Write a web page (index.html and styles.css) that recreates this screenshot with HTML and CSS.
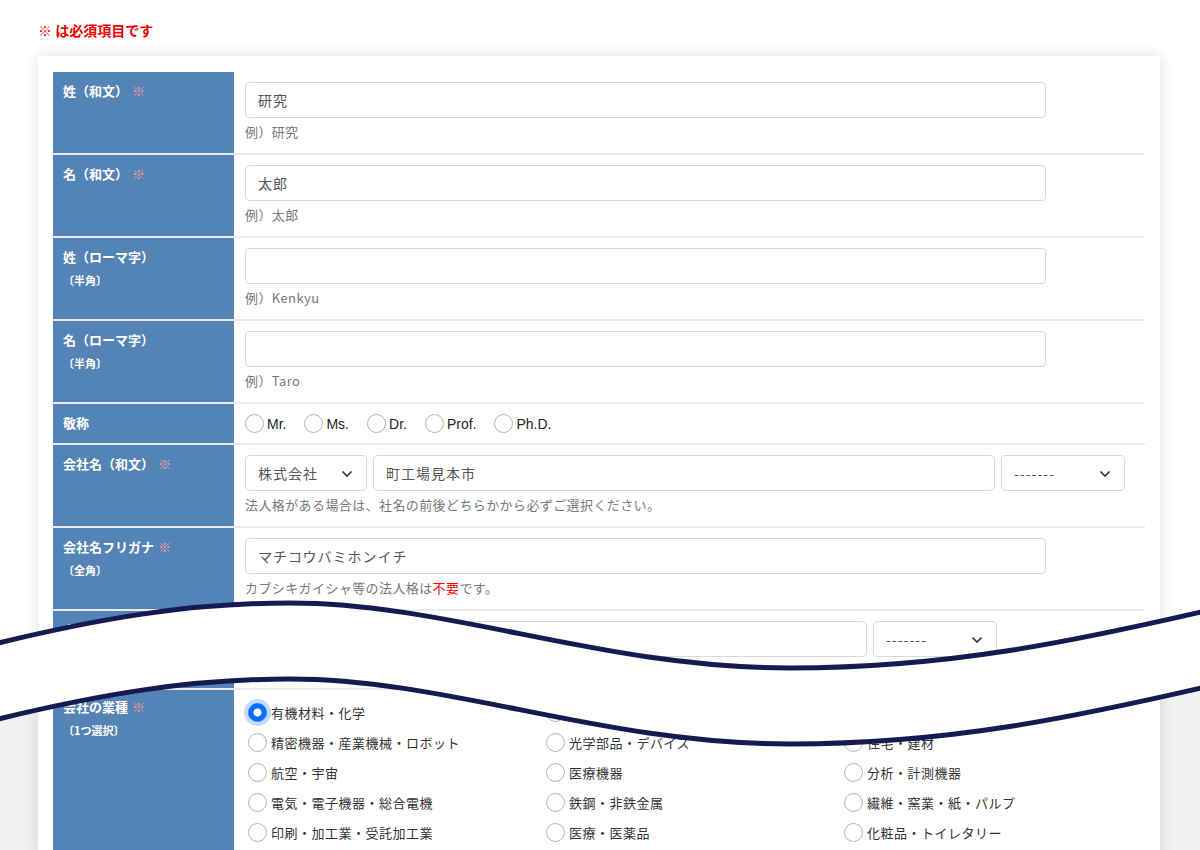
FILE: index.html
```html
<!DOCTYPE html>
<html lang="ja">
<head>
    <meta charset="UTF-8">
    <meta name="viewport" content="width=device-width, initial-scale=1.0">
    <title>お問い合わせフォーム</title>
    <link rel="stylesheet" href="styles.css">
</head>
<body>
    <p class="note">※ は必須項目です</p>

    <section class="card">
        <div class="form-table">
            <div class="row">
                <div class="label">姓（和文）<span class="req">※</span></div>
                <div class="field">
                    <input class="input wide" type="text" value="研究">
                    <p class="hint">例）研究</p>
                </div>
            </div>
            <div class="row">
                <div class="label">名（和文）<span class="req">※</span></div>
                <div class="field">
                    <input class="input wide" type="text" value="太郎">
                    <p class="hint">例）太郎</p>
                </div>
            </div>
            <div class="row">
                <div class="label">姓（ローマ字）<small>〔半角〕</small></div>
                <div class="field">
                    <input class="input wide" type="text">
                    <p class="hint">例）Kenkyu</p>
                </div>
            </div>
            <div class="row">
                <div class="label">名（ローマ字）<small>〔半角〕</small></div>
                <div class="field">
                    <input class="input wide" type="text">
                    <p class="hint">例）Taro</p>
                </div>
            </div>
            <div class="row">
                <div class="label">敬称</div>
                <div class="field field-center">
                    <div class="titles">
                        <label class="radio"><input type="radio" name="title">Mr.</label>
                        <label class="radio"><input type="radio" name="title">Ms.</label>
                        <label class="radio"><input type="radio" name="title">Dr.</label>
                        <label class="radio"><input type="radio" name="title">Prof.</label>
                        <label class="radio"><input type="radio" name="title">Ph.D.</label>
                    </div>
                </div>
            </div>
            <div class="row">
                <div class="label">会社名（和文）<span class="req">※</span></div>
                <div class="field">
                    <div class="group company">
                        <div class="select sel-pre">
                            <select><option>株式会社</option></select>
                            <svg viewBox="0 0 12 8"><polyline points="1.5,1.5 6,6 10.5,1.5"/></svg>
                        </div>
                        <input class="input grow" type="text" value="町工場見本市">
                        <div class="select sel-post">
                            <select><option>-------</option></select>
                            <svg viewBox="0 0 12 8"><polyline points="1.5,1.5 6,6 10.5,1.5"/></svg>
                        </div>
                    </div>
                    <p class="hint">法人格がある場合は、社名の前後どちらかから必ずご選択ください。</p>
                </div>
            </div>
            <div class="row">
                <div class="label">会社名フリガナ<span class="req">※</span><small>〔全角〕</small></div>
                <div class="field">
                    <input class="input wide" type="text" value="マチコウバミホンイチ">
                    <p class="hint">カブシキガイシャ等の法人格は<span class="red">不要</span>です。</p>
                </div>
            </div>
            <div class="row row-short">
                <div class="label">会社名（英文）<span class="req">※</span><small>〔半角英数字〕</small></div>
                <div class="field">
                    <div class="group company-en">
                        <input class="input grow" type="text">
                        <div class="select sel-post">
                            <select><option>-------</option></select>
                            <svg viewBox="0 0 12 8"><polyline points="1.5,1.5 6,6 10.5,1.5"/></svg>
                        </div>
                    </div>
                </div>
            </div>
            <div class="row">
                <div class="label label-tight">会社の業種<span class="req">※</span><small>〔1つ選択〕</small></div>
                <div class="field field-list">
                    <div class="industries">
                        <label class="radio"><input type="radio" name="industry" checked>有機材料・化学</label>
                        <label class="radio"><input type="radio" name="industry">無機材料・セラミックス</label>
                        <label class="radio"><input type="radio" name="industry">自動車・輸送機器</label>
                        <label class="radio"><input type="radio" name="industry">精密機器・産業機械・ロボット</label>
                        <label class="radio"><input type="radio" name="industry">光学部品・デバイス</label>
                        <label class="radio"><input type="radio" name="industry">住宅・建材</label>
                        <label class="radio"><input type="radio" name="industry">航空・宇宙</label>
                        <label class="radio"><input type="radio" name="industry">医療機器</label>
                        <label class="radio"><input type="radio" name="industry">分析・計測機器</label>
                        <label class="radio"><input type="radio" name="industry">電気・電子機器・総合電機</label>
                        <label class="radio"><input type="radio" name="industry">鉄鋼・非鉄金属</label>
                        <label class="radio"><input type="radio" name="industry">繊維・窯業・紙・パルプ</label>
                        <label class="radio"><input type="radio" name="industry">印刷・加工業・受託加工業</label>
                        <label class="radio"><input type="radio" name="industry">医療・医薬品</label>
                        <label class="radio"><input type="radio" name="industry">化粧品・トイレタリー</label>
                    </div>
                </div>
            </div>
        </div>
    </section>

    <!-- 途中省略の波線 -->
    <svg class="wave" viewBox="0 0 1200 200" preserveAspectRatio="none">
        <path class="wave-fill" d="M-10,645 C100,618 190,603 290,603 C450,603 600,668 790,668 C950,668 1080,640 1210,610 L1210,686 C1080,716 950,744 790,744 C600,744 450,679 290,679 C190,679 100,694 -10,721 Z" transform="translate(0,-590)"/>
        <path class="wave-line" d="M-10,645 C100,618 190,603 290,603 C450,603 600,668 790,668 C950,668 1080,640 1210,610" transform="translate(0,-590)"/>
        <path class="wave-line" d="M-10,721 C100,694 190,679 290,679 C450,679 600,744 790,744 C950,744 1080,716 1210,686" transform="translate(0,-590)"/>
    </svg>
</body>
</html>
```

FILE: styles.css
```css
html{
    box-sizing: border-box;
    font-family: "Noto Sans CJK JP", "Noto Sans", sans-serif;
    font-size: 13px;
}
*,
*::before,
*::after{
    box-sizing: inherit;
}

body{
    margin: 0;
    height: 850px;
    overflow: hidden;
    position: relative;
    color: #333;
    background: linear-gradient(to bottom, #fff 690px, #f1f1f1 690px);
}

.note{
    margin: 0;
    padding: 20px 38px 0;
    line-height: 20px;
    font-size: 14px;
    font-weight: bold;
    color: #f00000;
}

.card{
    margin: 16px 40px 0 38px;
    padding: 16px 15px 0;
    background-color: #fff;
    box-shadow: 0 0 14px rgba(0,0,0,.12);
}

.row{
    display: grid;
    grid-template-columns: 181px 1fr;
    border-bottom: 2px solid #e9ecef;
}
.label{
    padding: 9px 10px;
    background-color: #5483b5;
    color: #fff;
    font-weight: bold;
    line-height: 20px;
}
.label small{
    display: block;
    margin-top: 3px;
    font-size: 11px;
}
.label-tight{
    padding-top: 7px;
}
.req{
    margin-left: 4px;
    color: #f19c9c;
    font-weight: normal;
}

.field{
    padding: 10px 10px 10px 11px;
}
.field-center{
    display: flex;
    align-items: center;
    padding-bottom: 10px;
}
.field-list{
    padding-top: 7px;
}

.input,
.select select{
    height: 36px;
    padding: 0 12px;
    border: 1px solid #d6d9dd;
    border-radius: 4px;
    background-color: #fff;
    font-family: inherit;
    font-size: 14px;
    letter-spacing: 1px;
    color: #555;
    outline: none;
}
.wide{
    display: block;
    width: 801px;
}
.grow{
    flex-grow: 1;
    min-width: 0;
}

.group{
    display: flex;
    gap: 6px;
}
.company{
    width: 880px;
}
.company-en{
    width: 752px;
}

.select{
    position: relative;
}
.select select{
    width: 100%;
    appearance: none;
    -webkit-appearance: none;
}
.select svg{
    position: absolute;
    top: 15px;
    right: 14px;
    width: 12px;
    height: 8px;
    fill: none;
    stroke: #333;
    stroke-width: 1.6;
    pointer-events: none;
}
.sel-pre{
    width: 122px;
}
.sel-post{
    width: 124px;
}

.hint{
    margin: 3px 0 0;
    line-height: 22px;
    font-size: 13px;
    letter-spacing: .4px;
    color: #777;
}
.red{
    color: #f00;
}

.row-short .field{
    padding-bottom: 31px;
}

/* ラジオボタン */
.radio{
    display: flex;
    align-items: center;
    gap: 3px;
    white-space: nowrap;
}
.radio input{
    appearance: none;
    -webkit-appearance: none;
    margin: 0;
    width: 19px;
    height: 19px;
    flex-shrink: 0;
    border: 1px solid #b4b4b4;
    border-radius: 50%;
    background-color: #fff;
}
.radio input:checked{
    border-color: #0d6efd;
    background: radial-gradient(circle, #fff 3.5px, #0d6efd 4.5px);
    box-shadow: 0 0 0 4px rgba(13,110,253,.25);
}

.titles{
    display: flex;
    gap: 18px;
    height: 19px;
}
.titles .radio{
    gap: 3px;
    font-family: "Liberation Sans", Arial, sans-serif;
    font-size: 14px;
    color: #222;
}

.industries{
    display: grid;
    grid-template-columns: repeat(3, 298px);
    grid-auto-rows: 30px;
}
.industries .radio{
    padding-left: 3px;
    gap: 4px;
    letter-spacing: .5px;
    color: #333;
}

/* 波線 */
.wave{
    position: absolute;
    left: 0;
    top: 590px;
    width: 1200px;
    height: 200px;
}
.wave-fill{
    fill: #fff;
}
.wave-line{
    fill: none;
    stroke: #151a52;
    stroke-width: 5;
}
```
